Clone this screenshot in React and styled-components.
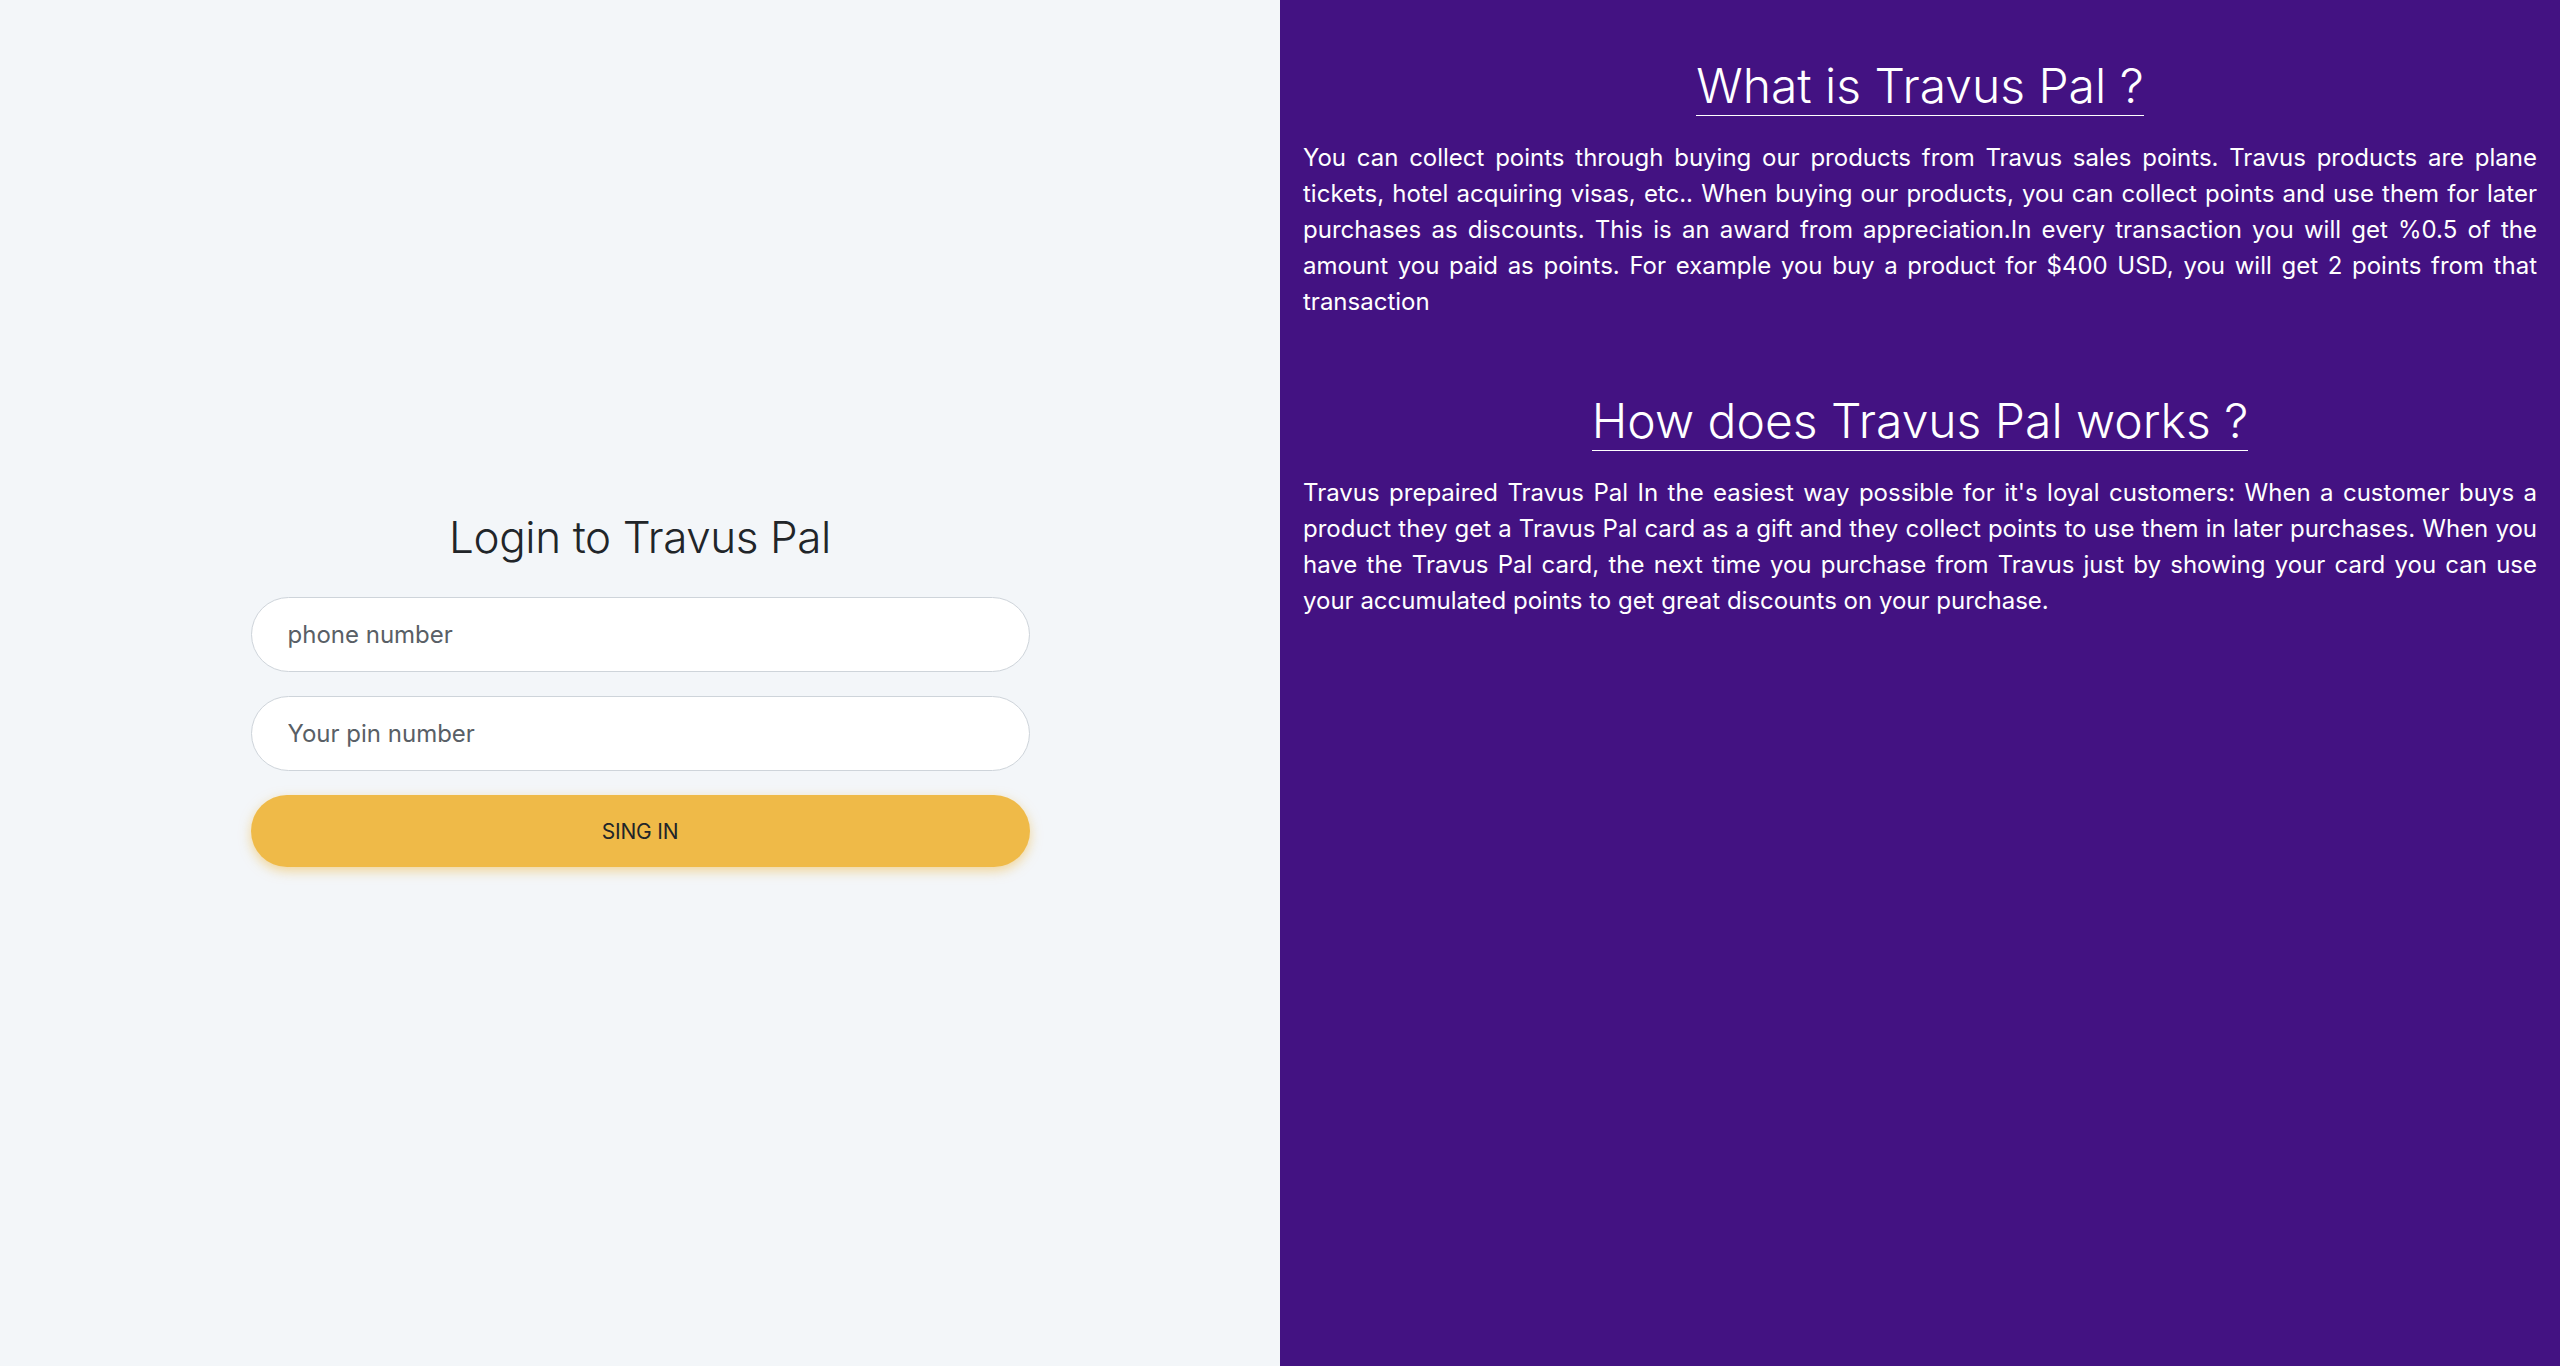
import React from 'react';
import styled, { createGlobalStyle } from 'styled-components';

const GlobalStyle = createGlobalStyle`
  html, body {
    margin: 0;
    padding: 0;
  }
  body {
    font-family: Inter, "Noto Sans", "Liberation Sans", sans-serif;
    color: #212529;
    background: #f3f6f9;
  }
  * { box-sizing: border-box; }
`;

const Page = styled.div`
  display: grid;
  grid-template-columns: 1fr 1fr;
  height: 1366px;
`;

const LoginSide = styled.div`
  background: #f3f6f9;
  display: flex;
  align-items: center;
  justify-content: center;
  padding-top: 12px;
`;

const LoginForm = styled.form`
  width: 779px;
  display: flex;
  flex-direction: column;
  gap: 24px;
`;

const LoginTitle = styled.h2`
  margin: 0 0 10px;
  font-size: 44px;
  line-height: 1.2;
  font-weight: 300;
  letter-spacing: -0.4px;
  text-align: center;
  color: #212529;
`;

const Field = styled.input`
  height: 75px;
  border: 1px solid #ced4da;
  border-radius: 40px;
  background: #fff;
  padding: 0 36px;
  font-family: inherit;
  font-size: 24px;
  color: #212529;
  outline: none;

  &::placeholder {
    color: #595f66;
  }
`;

const SignButton = styled.button`
  height: 72px;
  border: none;
  border-radius: 40px;
  background: #efba48;
  box-shadow: 0 4px 12px rgba(239, 186, 72, 0.55);
  font-family: inherit;
  font-size: 21px;
  letter-spacing: -0.2px;
  color: #212529;
  cursor: pointer;
`;

const InfoSide = styled.div`
  background: #431282;
  color: #fff;
  padding: 57px 23px 0 23px;
`;

const Section = styled.section`
  text-align: center;
  margin-bottom: 72px;
`;

const Heading = styled.h1`
  display: inline-block;
  margin: 0 0 24px;
  font-size: 48px;
  line-height: 58px;
  font-weight: 300;
  border-bottom: 1px solid #fff;
`;

const Text = styled.p`
  margin: 0;
  font-size: 24px;
  line-height: 36px;
  text-align: justify;
`;

export default function App() {
  return (
    <>
      <GlobalStyle />
      <Page>
        <LoginSide>
          <LoginForm onSubmit={e => e.preventDefault()}>
            <LoginTitle>Login to Travus Pal</LoginTitle>
            <Field type="text" placeholder="phone number" />
            <Field type="password" placeholder="Your pin number" />
            <SignButton type="submit">SING IN</SignButton>
          </LoginForm>
        </LoginSide>
        <InfoSide>
          <Section>
            <Heading>What is Travus Pal ?</Heading>
            <Text>
              You can collect points through buying our products from Travus sales points. Travus products are plane tickets, hotel acquiring visas, etc.. When buying our products, you can collect points and use them for later purchases as discounts. This is an award from appreciation.In every transaction you will get %0.5 of the amount you paid as points. For example you buy a product for $400 USD, you will get 2 points from that transaction
            </Text>
          </Section>
          <Section>
            <Heading>How does Travus Pal works ?</Heading>
            <Text>
              Travus prepaired Travus Pal In the easiest way possible for it's loyal customers: When a customer buys a product they get a Travus Pal card as a gift and they collect points to use them in later purchases. When you have the Travus Pal card, the next time you purchase from Travus just by showing your card you can use your accumulated points to get great discounts on your purchase.
            </Text>
          </Section>
        </InfoSide>
      </Page>
    </>
  );
}
